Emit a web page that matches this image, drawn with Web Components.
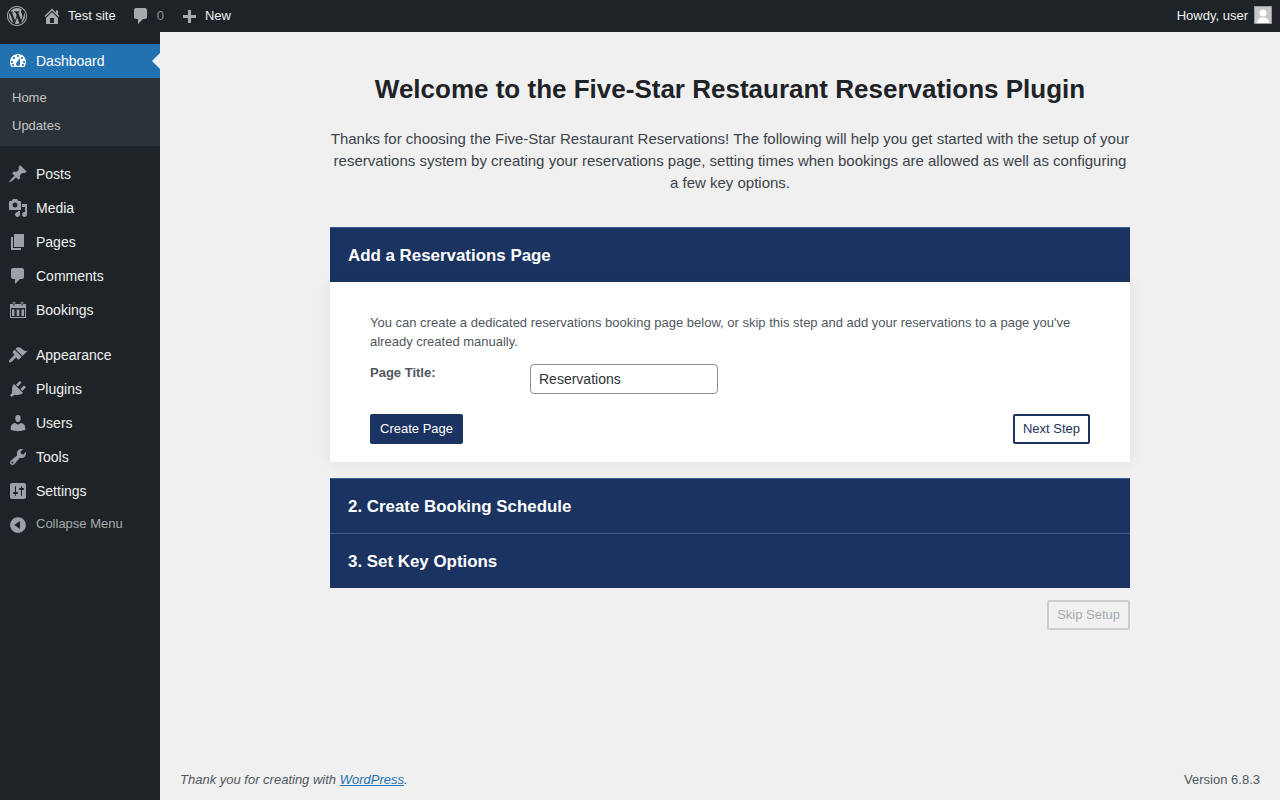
<!DOCTYPE html>
<html>
<head>
<meta charset="utf-8">
<title>Five-Star Restaurant Reservations</title>
<style>
  html, body { margin: 0; height: 100%; }
  body { background: #f0f0f1; font-family: "Liberation Sans", Arial, sans-serif; overflow: hidden; }
</style>
</head>
<body>
<wp-shell></wp-shell>
<script>
const ICONS = {
  wp: 'M20 10c0-5.52-4.48-10-10-10S0 4.48 0 10s4.48 10 10 10 10-4.48 10-10zM10 1.01c4.97 0 8.99 4.02 8.99 8.99s-4.02 8.99-8.99 8.99S1.01 14.97 1.01 10 5.03 1.01 10 1.01zM8.01 14.82L4.96 6.61c.49-.03 1.05-.08 1.05-.08.43-.05.38-1.01-.06-.99 0 0-1.29.1-2.13.1-.15 0-.33 0-.52-.01 1.44-2.17 3.9-3.6 6.7-3.6 2.09 0 3.99.79 5.41 2.09-.6-.08-1.45.35-1.45 1.42 0 .66.38 1.22.79 1.88.31.54.5 1.22.5 2.21 0 1.34-1.27 4.48-1.27 4.48l-2.71-7.5c.48-.03.75-.16.75-.16.43-.05.38-1.1-.05-1.08 0 0-1.3.11-2.14.11-.78 0-2.11-.11-2.11-.11-.43-.02-.48 1.06-.05 1.08l.84.08 1.12 3.04zm6.02 2.15L16.64 10s.67-1.69.39-3.81c.63 1.14.94 2.42.94 3.81 0 2.96-1.56 5.58-3.94 6.97zM2.68 6.77L6.5 16.89C3.84 15.6 2.03 12.98 2.03 10c0-1.14.2-2.18.65-3.23zm7.45 4.53l2.29 6.25c-.75.27-1.57.42-2.42.42-.72 0-1.41-.11-2.06-.3z',
  home: 'M16 8.5l1.53 1.53-1.06 1.06L10 4.62l-6.47 6.47-1.06-1.06L10 2.5l4 4v-2h2v4zm-6-2.46l6 5.99V18H4v-5.97zM12 17v-5H8v5h4z',
  comment: 'M5 2h9c1.1 0 2 .9 2 2v7c0 1.1-.9 2-2 2h-2l-5 5v-5H5c-1.1 0-2-.9-2-2V4c0-1.1.9-2 2-2z',
  plus: 'M17 9v3h-5v5H9v-5H4V9h5V4h3v5h5z',
  dashboard: 'M3.76 16h12.48c1.1-1.37 1.76-3.11 1.76-5 0-4.42-3.58-8-8-8s-8 3.58-8 8c0 1.89.66 3.63 1.76 5zM10 4c.55 0 1 .45 1 1s-.45 1-1 1-1-.45-1-1 .45-1 1-1zM6 6c.55 0 1 .45 1 1s-.45 1-1 1-1-.45-1-1 .45-1 1-1zm8 0c.55 0 1 .45 1 1s-.45 1-1 1-1-.45-1-1 .45-1 1-1zm-5.37 5.55L12 7v6c0 1.1-.9 2-2 2s-2-.9-2-2c0-.57.24-1.08.63-1.45zM4 10c.55 0 1 .45 1 1s-.45 1-1 1-1-.45-1-1 .45-1 1-1zm12 0c.55 0 1 .45 1 1s-.45 1-1 1-1-.45-1-1 .45-1 1-1zM5 13c.55 0 1 .45 1 1s-.45 1-1 1-1-.45-1-1 .45-1 1-1zm10 0c.55 0 1 .45 1 1s-.45 1-1 1-1-.45-1-1 .45-1 1-1z',
  post: 'M10.44 3.02l1.82-1.82 6.36 6.35-1.83 1.82c-1.05-.68-2.48-.57-3.41.36l-.75.75c-.92.93-1.04 2.35-.35 3.41l-1.83 1.82-2.41-2.41-2.8 2.79c-.42.42-3.38 2.71-3.8 2.29s1.86-3.39 2.28-3.81l2.79-2.79L4.1 9.36l1.83-1.82c1.05.69 2.48.57 3.4-.36l.75-.75c.93-.92 1.05-2.35.36-3.41z',
  media: 'M13 11V4c0-.55-.45-1-1-1h-1.67L9 1H5L3.67 3H2c-.55 0-1 .45-1 1v7c0 .55.45 1 1 1h10c.55 0 1-.45 1-1zM7 4.5c1.38 0 2.5 1.12 2.5 2.5S8.38 9.5 7 9.5 4.5 8.38 4.5 7 5.62 4.5 7 4.5zM14 6h5v10.5c0 1.38-1.12 2.5-2.5 2.5S14 17.88 14 16.5s1.12-2.5 2.5-2.5c.17 0 .34.02.5.05V9h-3V6zm-4 8.05V13h2v3.5c0 1.38-1.12 2.5-2.5 2.5S7 17.88 7 16.5 8.12 14 9.5 14c.17 0 .34.02.5.05z',
  page: 'M6 15V2h10v13H6zm-1 1h8v2H3V5h2v11z',
  calendar: 'M2 4h2.700V3c0-.7.6-1.300 1.300-1.300S7.300 2.300 7.300 3v1h5.400V3c0-.7.6-1.300 1.300-1.300s1.300.6 1.300 1.300v1H18v14H2V4zm3.500-1v2.500c0 .3.2.5.5.5s.5-.2.5-.5V3c0-.3-.2-.5-.5-.5s-.5.2-.5.5zm8 0v2.500c0 .3.2.5.5.5s.5-.2.5-.5V3c0-.3-.2-.5-.5-.5s-.5.2-.5.5zM3 8v9h14V8H3zm1 1.500h2.500V16H4V9.500zm4.700 0h2.600V16H8.700V9.500zm4.800 0H16V16h-2.500V9.500z',
  appearance: 'M14.48 11.06L7.41 3.99l1.5-1.5c.5-.56 2.3-.47 3.51.32 1.21.8 1.43 1.28 2.91 2.1 1.18.64 2.45 1.26 4.45.85zm-.71.71L6.7 4.7 4.93 6.47c-.39.39-.39 1.02 0 1.41l1.06 1.06c.39.39.39 1.03 0 1.42L1.400 15c-.56.56-.56 1.480 0 2.040s1.480.56 2.040 0l3.970-3.970c.39-.39 1.020-.39 1.410 0l1.060 1.060c.39.39 1.020.39 1.410 0z',
  plugins: 'M13.11 4.36L9.87 7.6 8 5.73l3.24-3.24c.35-.34 1.05-.2 1.56.32.52.51.66 1.21.31 1.55zm-8 1.77l.91-1.12 9.01 9.01-1.19.84c-.71.71-2.63 1.16-3.82 1.16H6.14L4.9 17.26c-.59.59-1.54.59-2.12 0-.59-.58-.59-1.53 0-2.12l1.24-1.24v-3.88c0-1.13.4-3.19 1.09-3.89zm7.26 3.97l3.24-3.24c.34-.35 1.04-.21 1.55.31.52.51.66 1.21.31 1.55l-3.24 3.25z',
  users: 'M10 9.25c-2.27 0-2.73-3.44-2.73-3.44C7 4.02 7.82 2 9.97 2c2.16 0 2.98 2.02 2.71 3.81 0 0-.41 3.44-2.68 3.44zm0 2.57L12.72 10c2.39 0 4.52 2.33 4.52 4.53v2.490s-3.650 1.130-7.240 1.130c-3.650 0-7.240-1.130-7.240-1.130v-2.490c0-2.250 1.940-4.480 4.470-4.480z',
  tools: 'M16.68 9.77c-1.34 1.34-3.3 1.67-4.95.99l-5.41 6.52c-.99.99-2.59.99-3.58 0s-.99-2.59 0-3.57l6.52-5.42c-.68-1.65-.35-3.61.99-4.95 1.28-1.28 3.12-1.62 4.72-1.06l-2.89 2.89 2.82 2.82 2.86-2.87c.53 1.58.18 3.39-1.08 4.65zM3.81 16.21c.4.39 1.04.39 1.43 0 .4-.4.4-1.04 0-1.43-.39-.4-1.03-.4-1.43 0-.39.39-.39 1.03 0 1.43z',
  settings: 'M18 16V4c0-1.1-.9-2-2-2H4c-1.1 0-2 .9-2 2v12c0 1.1.9 2 2 2h12c1.1 0 2-.9 2-2zM8 11h1c.55 0 1 .45 1 1s-.45 1-1 1H8v1.5c0 .28-.22.5-.5.5s-.5-.22-.5-.5V13H6c-.55 0-1-.45-1-1s.45-1 1-1h1V5.5c0-.28.22-.5.5-.5s.5.22.5.5V11zm5-2h-1c-.55 0-1-.45-1-1s.45-1 1-1h1V5.500c0-.28.22-.5.5-.5s.5.22.5.5V7h1c.55 0 1 .45 1 1s-.45 1-1 1h-1v5.500c0 .28-.22.5-.5.5s-.5-.22-.5-.5V9z',
  collapse: 'M10 2.16c4.33 0 7.84 3.51 7.84 7.84s-3.51 7.84-7.84 7.84S2.16 14.33 2.16 10 5.71 2.16 10 2.16zm2 11.72V6.120L6.180 9.970z'
};

function icon(name, size = 20) {
  return `<svg width="${size}" height="${size}" viewBox="0 0 20 20" fill="currentColor" fill-rule="evenodd" aria-hidden="true"><path d="${ICONS[name]}"/></svg>`;
}

// top black bar
class WpAdminBar extends HTMLElement {
  connectedCallback() {
    this.attachShadow({ mode: 'open' }).innerHTML = `
      <style>
        :host { display: flex; align-items: center; height: 32px; background: #1d2327; color: #f0f0f1; font-size: 13px; flex: none; }
        .item { display: flex; align-items: center; height: 32px; }
        .item svg { color: #a7aaad; }
        .item span { padding-bottom: 2px; }
        .logo { padding: 0 7px; }
        .logo svg { display: block; }
        .site { padding-left: 8px; }
        .site span { margin-left: 6px; }
        .comments { padding-left: 15px; }
        .comments span { margin-left: 6px; color: #8c8f94; }
        .new { padding-left: 15px; }
        .new span { margin-left: 6px; }
        .howdy { margin-left: auto; padding-right: 8px; box-sizing: border-box; padding-bottom: 2px; }
        .avatar { width: 18px; height: 18px; margin-left: 6px; background: #c7c7c7; overflow: hidden; box-sizing: border-box; border: 1px solid #9b9b9b; }
        .avatar svg { display: block; color: #fff; }
      </style>
      <div class="item logo">${icon('wp', 20)}</div>
      <div class="item site">${icon('home', 20)}<span>Test site</span></div>
      <div class="item comments">${icon('comment', 20)}<span>0</span></div>
      <div class="item new">${icon('plus', 20)}<span>New</span></div>
      <div class="item howdy">Howdy, user<div class="avatar"><svg width="16" height="16" viewBox="0 0 16 16"><circle cx="8" cy="6" r="3.500" fill="currentColor"/><path d="M2 16c0-4 2.500-5.500 6-5.500s6 1.500 6 5.500z" fill="currentColor"/></svg></div></div>
    `;
  }
}

class WpMenuItem extends HTMLElement {
  connectedCallback() {
    this.attachShadow({ mode: 'open' }).innerHTML = `
      <style>
        :host { display: flex; align-items: center; height: 34px; color: #f0f0f1; font-size: 14px; position: relative; }
        :host([current]) { background: #2271b1; color: #fff; }
        :host([current]) svg { color: #fff; }
        :host([current])::after { content: ""; position: absolute; right: 0; top: 50%; margin-top: -8px; border: 8px solid transparent; border-right-color: #f0f0f1; border-left-width: 0; }
        svg { color: #9ca1a7; margin: 0 8px; flex: none; }
      </style>
      ${icon(this.getAttribute('icon'))}<slot></slot>
    `;
  }
}

class WpSideMenu extends HTMLElement {
  connectedCallback() {
    this.attachShadow({ mode: 'open' }).innerHTML = `
      <style>
        :host { display: block; width: 160px; flex: none; background: #1d2327; padding-top: 12px; box-sizing: border-box; }
        .sub { background: #2c3338; padding: 6px 0; margin-bottom: 11px; font-size: 13px; color: #c3c4c7; }
        .sub div { height: 28px; line-height: 28px; padding-left: 12px; }
        .sep { height: 11px; }
        .collapse { display: flex; align-items: center; height: 34px; font-size: 13px; color: #a7aaad; }
        .collapse svg { margin: 0 8px; color: #9ca1a7; flex: none; }
        .collapse span { padding-bottom: 4px; }
      </style>
      <wp-menu-item icon="dashboard" current>Dashboard</wp-menu-item>
      <div class="sub"><div>Home</div><div>Updates</div></div>
      <wp-menu-item icon="post">Posts</wp-menu-item>
      <wp-menu-item icon="media">Media</wp-menu-item>
      <wp-menu-item icon="page">Pages</wp-menu-item>
      <wp-menu-item icon="comment">Comments</wp-menu-item>
      <wp-menu-item icon="calendar">Bookings</wp-menu-item>
      <div class="sep"></div>
      <wp-menu-item icon="appearance">Appearance</wp-menu-item>
      <wp-menu-item icon="plugins">Plugins</wp-menu-item>
      <wp-menu-item icon="users">Users</wp-menu-item>
      <wp-menu-item icon="tools">Tools</wp-menu-item>
      <wp-menu-item icon="settings">Settings</wp-menu-item>
      <div class="collapse">${icon('collapse')}<span>Collapse Menu</span></div>
    `;
  }
}

class RtbButton extends HTMLElement {
  connectedCallback() {
    this.attachShadow({ mode: 'open' }).innerHTML = `
      <style>
        :host { display: inline-flex; align-items: center; height: 30px; padding: 0 10px 2px; box-sizing: border-box; font-size: 13px; border-radius: 2px; background: #1b3360; color: #fff; }
        :host([variant="outline"]) { background: #fff; color: #1b3360; border: 2px solid #1b3360; padding: 0 8px 2px; }
        :host([variant="ghost"]) { background: transparent; color: #a7aaad; border: 2px solid #ccc; padding: 0 8px 2px; }
      </style>
      <slot></slot>
    `;
  }
}

class RtbStepHead extends HTMLElement {
  connectedCallback() {
    this.attachShadow({ mode: 'open' }).innerHTML = `
      <style>
        :host { display: flex; align-items: center; height: 55px; box-sizing: border-box; padding: 1px 18px 0; background: #1b3360; border-top: 1px solid #3a5a94; color: #fff; font-size: 16.9px; font-weight: 700; }
      </style>
      <slot></slot>
    `;
  }
}

class RtbStepOne extends HTMLElement {
  connectedCallback() {
    this.attachShadow({ mode: 'open' }).innerHTML = `
      <style>
        :host { display: block; background: #fff; box-shadow: 0 0 14px rgba(0,0,0,.07); padding: 31px 40px 18px; font-size: 13px; line-height: 19px; color: #50575e; }
        p { margin: 0; }
        .row { display: flex; margin-top: 13px; }
        label { width: 160px; font-weight: 700; line-height: 17px; }
        .input { width: 188px; height: 30px; box-sizing: border-box; border: 1px solid #8c8f94; border-radius: 4px; padding: 0 8px; font-size: 14px; line-height: 28px; color: #2c3338; background: #fff; }
        .actions { display: flex; justify-content: space-between; margin-top: 20px; }
      </style>
      <p>You can create a dedicated reservations booking page below, or skip this step and add your reservations to a page you've already created manually.</p>
      <div class="row"><label>Page Title:</label><div class="input">Reservations</div></div>
      <div class="actions">
        <rtb-button>Create Page</rtb-button>
        <rtb-button variant="outline">Next Step</rtb-button>
      </div>
    `;
  }
}

class RtbWizard extends HTMLElement {
  connectedCallback() {
    this.attachShadow({ mode: 'open' }).innerHTML = `
      <style>
        :host { display: block; width: 800px; margin: 0 auto; padding-top: 38px; }
        h1 { margin: 0; font-size: 26px; line-height: 38px; font-weight: 700; color: #1d2327; text-align: center; }
        .intro { margin: 20px 0 0; font-size: 15px; line-height: 22px; color: #3c434a; text-align: center; }
        .steps { margin-top: 33px; }
        .gap { height: 16px; }
        .skip { display: flex; justify-content: flex-end; margin-top: 12px; }
      </style>
      <h1>Welcome to the Five-Star Restaurant Reservations Plugin</h1>
      <p class="intro">Thanks for choosing the Five-Star Restaurant Reservations! The following will help you get started with the setup of your reservations system by creating your reservations page, setting times when bookings are allowed as well as configuring a few key options.</p>
      <div class="steps">
        <rtb-step-head>Add a Reservations Page</rtb-step-head>
        <rtb-step-one></rtb-step-one>
        <div class="gap"></div>
        <rtb-step-head>2. Create Booking Schedule</rtb-step-head>
        <rtb-step-head>3. Set Key Options</rtb-step-head>
      </div>
      <div class="skip"><rtb-button variant="ghost">Skip Setup</rtb-button></div>
    `;
  }
}

class WpFooter extends HTMLElement {
  connectedCallback() {
    this.attachShadow({ mode: 'open' }).innerHTML = `
      <style>
        :host { display: flex; justify-content: space-between; align-items: center; height: 42px; padding: 0 20px 0 0; font-size: 13px; color: #50575e; }
        i a { color: #2271b1; }
      </style>
      <i>Thank you for creating with <a href="#">WordPress</a>.</i>
      <span>Version 6.8.3</span>
    `;
  }
}

class WpShell extends HTMLElement {
  connectedCallback() {
    this.attachShadow({ mode: 'open' }).innerHTML = `
      <style>
        :host { display: flex; flex-direction: column; width: 1280px; height: 800px; }
        .body { display: flex; flex: 1; min-height: 0; }
        .content { flex: 1; display: flex; flex-direction: column; min-width: 0; padding-left: 20px; }
        rtb-wizard { flex: 1; }
      </style>
      <wp-admin-bar></wp-admin-bar>
      <div class="body">
        <wp-side-menu></wp-side-menu>
        <div class="content">
          <rtb-wizard></rtb-wizard>
          <wp-footer></wp-footer>
        </div>
      </div>
    `;
  }
}

customElements.define('wp-admin-bar', WpAdminBar);
customElements.define('wp-menu-item', WpMenuItem);
customElements.define('wp-side-menu', WpSideMenu);
customElements.define('rtb-button', RtbButton);
customElements.define('rtb-step-head', RtbStepHead);
customElements.define('rtb-step-one', RtbStepOne);
customElements.define('rtb-wizard', RtbWizard);
customElements.define('wp-footer', WpFooter);
customElements.define('wp-shell', WpShell);
</script>
</body>
</html>
